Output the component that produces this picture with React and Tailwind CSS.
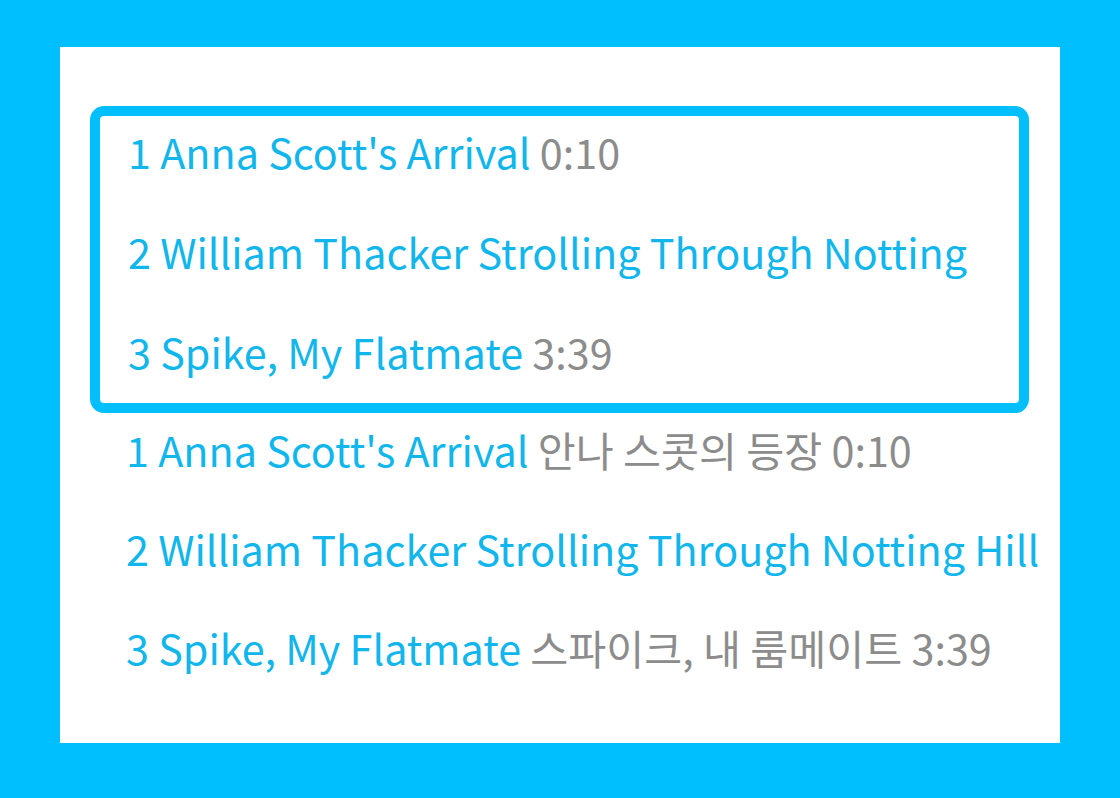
import React from "react";

const font = { fontFamily: '"Noto Sans CJK KR", "Noto Sans", sans-serif' };

function Row({ title, extra }) {
  return (
    <div className="h-[60px] leading-[60px] whitespace-nowrap text-[41.3px]">
      <span className="text-[#10b6ec]">{title}</span>
      {extra ? <span className="text-[#8c8c8c]"> {extra}</span> : null}
    </div>
  );
}

export default function App() {
  return (
    <div className="w-[1120px] h-[798px] bg-[#00bfff] pt-[47px] pl-[60px] overflow-hidden" style={font}>
      <div className="w-[1000px] h-[696px] bg-white pt-[59px] overflow-hidden">
        <div className="ml-[30px] w-[939px] h-[307px] border-[10px] border-[#00bfff] rounded-[14px] pl-[28px] pt-[5px] flex flex-col gap-[40px]">
          <Row title="1 Anna Scott's Arrival" extra="0:10" />
          <Row title="2 William Thacker Strolling Through Notting" />
          <Row title="3 Spike, My Flatmate" extra="3:39" />
        </div>
        <div className="ml-[66px] mt-[6px] flex flex-col gap-[39px]">
          <Row title="1 Anna Scott's Arrival" extra="안나 스콧의 등장 0:10" />
          <Row title="2 William Thacker Strolling Through Notting Hill" />
          <Row title="3 Spike, My Flatmate" extra="스파이크, 내 룸메이트 3:39" />
        </div>
      </div>
    </div>
  );
}
